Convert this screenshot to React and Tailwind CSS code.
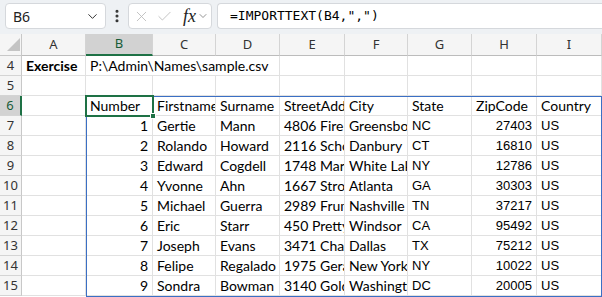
import React from 'react'
import { ChevronDown, EllipsisVertical, X, Check } from 'lucide-react'

const COLS = ['A','B','C','D','E','F','G','H','I']
const HEAD = ['Number','Firstname','Surname','StreetAddress','City','State','ZipCode','Country']
const ROWS = [
  [1,'Gertie','Mann','4806 Fire Access Road','Greensboro','NC',27403,'US'],
  [2,'Rolando','Howard','2116 Schoolhouse Road','Danbury','CT',16810,'US'],
  [3,'Edward','Cogdell','1748 Marshall Street','White Lake','NY',12786,'US'],
  [4,'Yvonne','Ahn','1667 Strococo Lane','Atlanta','GA',30303,'US'],
  [5,'Michael','Guerra','2989 Frum Street','Nashville','TN',37217,'US'],
  [6,'Eric','Starr','450 Pretty View Lane','Windsor','CA',95492,'US'],
  [7,'Joseph','Evans','3471 Charles Street','Dallas','TX',75212,'US'],
  [8,'Felipe','Regalado','1975 Geraldine Lane','New York','NY',10022,'US'],
  [9,'Sondra','Bowman','3140 Gold Cliff Circle','Washington','DC',20005,'US'],
]

const aptos = "font-['Lato','Noto_Sans',sans-serif] text-[14px]"
const arial = "font-['Liberation_Sans',Arial,sans-serif] text-[13px]"
const cell = 'h-[20px] border-r border-b border-[#e1e1e1] overflow-hidden whitespace-nowrap px-[4px] flex items-center text-black'

function RowHead({ n, sel }) {
  return (
    <div className={`h-[20px] flex items-center justify-center border-b border-[#d4d4d4] text-[13px] font-['Noto_Sans',sans-serif]
      ${sel ? 'bg-[#d2d2d2] text-[#185c37] border-r-2 border-r-[#1e7145]' : 'bg-[#f5f5f5] text-[#333] border-r border-r-[#c8c8c8]'}`}>
      {n}
    </div>
  )
}

export default function App() {
  return (
    <div className="w-[602px] h-[297px] overflow-hidden bg-white select-none">
      {/* formula bar */}
      <div className="h-[34px] bg-[#eef1f4] flex items-start pt-[3px] pl-[5px] gap-0">
        <div className="w-[101px] h-[26px] bg-white border border-[#d5d8dc] rounded-[4px] flex items-center pl-[7px] pr-[5px] justify-between">
          <span className="text-[14px] text-[#222] font-['Noto_Sans',sans-serif]">B6</span>
          <ChevronDown size={15} strokeWidth={1.6} className="text-[#333]" />
        </div>
        <div className="w-[22px] h-[26px] flex items-center justify-center">
          <EllipsisVertical size={16} strokeWidth={2.6} className="text-[#333]" />
        </div>
        <div className="w-[84px] h-[26px] bg-white border border-[#d5d8dc] rounded-[4px] flex items-center pl-[4px]">
          <X size={17} strokeWidth={1.2} className="text-[#b9b9b9]" />
          <Check size={17} strokeWidth={1.2} className="text-[#b9b9b9] ml-[6px]" />
          <span className="ml-[10px] text-[18px] italic font-['Liberation_Serif',serif] text-[#222] leading-none">fx</span>
          <ChevronDown size={12} strokeWidth={1.4} className="text-[#666] ml-[1px]" />
        </div>
        <div className="ml-[5px] flex-1 h-[26px] bg-white border border-r-0 border-[#d5d8dc] rounded-l-[4px] flex items-center pl-[12px]">
          <span className="text-[13px] text-black font-['DejaVu_Sans_Mono',monospace]">{'=IMPORTTEXT(B4,",")'}</span>
        </div>
      </div>

      {/* sheet */}
      <div className="relative">
        <div className="grid grid-cols-[22px_64px_67px_63px_64px_65px_63px_64px_65px_65px]">
          {/* column headers */}
          <div className="h-[22px] bg-[#f5f5f5] border-r border-b border-[#c8c8c8] relative">
            <svg width="13" height="13" className="absolute left-[7px] bottom-[4px]">
              <polygon points="13,0 13,13 0,13" fill="#c4c4c4" />
            </svg>
          </div>
          {COLS.map(c => (
            <div key={c} className={`h-[22px] flex items-center justify-center text-[13px] font-['Noto_Sans',sans-serif] border-r border-r-[#d4d4d4]
              ${c === 'B' ? 'bg-[#d2d2d2] text-[#185c37] border-b-2 border-b-[#1e7145]' : 'bg-[#f5f5f5] text-[#333] border-b border-b-[#bcbcbc]'}`}>
              {c}
            </div>
          ))}

          {/* row 4 */}
          <RowHead n={4} />
          <div className={`${cell} ${aptos} font-bold`}>Exercise</div>
          <div className={`${cell} ${aptos} col-span-3`}>P:\Admin\Names\sample.csv</div>
          {[0,1,2,3,4].map(i => <div key={i} className={cell} />)}

          {/* row 5 */}
          <RowHead n={5} />
          {COLS.map(c => <div key={c} className={cell} />)}

          {/* row 6 headers */}
          <RowHead n={6} sel />
          <div className={cell} />
          {HEAD.map(h => <div key={h} className={`${cell} ${aptos}`}>{h}</div>)}

          {ROWS.map((r, i) => (
            <React.Fragment key={i}>
              <RowHead n={7 + i} />
              <div className={cell} />
              <div className={`${cell} ${aptos} justify-end`}>{r[0]}</div>
              <div className={`${cell} ${aptos}`}>{r[1]}</div>
              <div className={`${cell} ${aptos}`}>{r[2]}</div>
              <div className={`${cell} ${aptos}`}>{r[3]}</div>
              <div className={`${cell} ${aptos}`}>{r[4]}</div>
              <div className={`${cell} ${arial}`}>{r[5]}</div>
              <div className={`${cell} ${arial} justify-end`}>{r[6]}</div>
              <div className={`${cell} ${arial}`}>{r[7]}</div>
            </React.Fragment>
          ))}
        </div>

        {/* spill range outline */}
        <div className="absolute left-[86px] top-[62px] w-[516px] h-[201px] border border-[#3b6fc4] pointer-events-none" />
        {/* active cell */}
        <div className="absolute left-[85px] top-[61px] w-[69px] h-[22px] border-2 border-[#1e7145] pointer-events-none" />
        <div className="absolute left-[150px] top-[79px] w-[6px] h-[6px] bg-[#1e7145] border border-white pointer-events-none" />
      </div>
    </div>
  )
}
